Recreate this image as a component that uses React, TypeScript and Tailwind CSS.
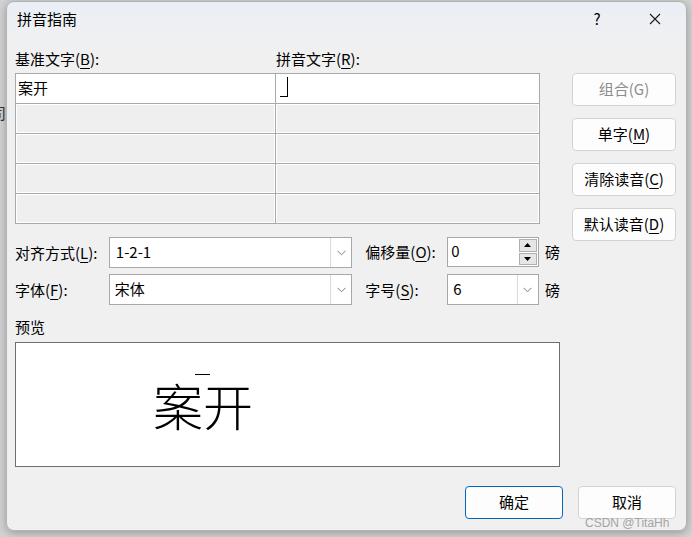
function U({ c }: { c: string }) {
  return <span className="underline underline-offset-[3px] decoration-1">{c}</span>;
}

function Chevron() {
  return (
    <svg width="9" height="6" viewBox="0 0 9 6" fill="none">
      <path d="M0.5 0.8 L4.5 4.8 L8.5 0.8" stroke="#7d7d7d" strokeWidth="1" />
    </svg>
  );
}

function Combo({ value, width, textClass }: { value: string; width: string; textClass?: string }) {
  return (
    <div className={`flex h-[31px] ${width} border border-[#a8a8a8] bg-white`}>
      <div className={`flex-1 pl-[5px] leading-[28px] ${textClass ?? ""}`}>{value}</div>
      <div className="flex w-[21px] items-center justify-center border-l border-[#dadada] bg-white">
        <Chevron />
      </div>
    </div>
  );
}

function Cell({ active, children }: { active?: boolean; children?: React.ReactNode }) {
  return (
    <div
      className={`-mt-px -ml-px h-[31px] border border-[#a9a9ab] ${
        active ? "bg-white" : "bg-[#efefef]"
      }`}
    >
      <div className={`h-full w-full ${active ? "" : "border border-white"}`}>{children}</div>
    </div>
  );
}

function SideButton({ children, disabled }: { children: React.ReactNode; disabled?: boolean }) {
  return (
    <button
      className={`h-[33px] w-[104px] rounded-[4px] border border-[#d3d3d3] bg-[#fdfdfd] text-[15px] ${
        disabled ? "text-[#8c8c8c]" : "text-black"
      }`}
    >
      {children}
    </button>
  );
}

export default function App() {
  return (
    <div className="relative h-[537px] w-[692px] overflow-hidden bg-[#d2d2d2] pl-[6px] pt-[1px] font-['Noto_Sans_CJK_SC',sans-serif] text-[15px] text-black">
      {/* app text behind the dialog */}
      <span className="absolute left-[-9px] top-[102px] text-[15px] text-[#333]">司</span>

      <div className="relative h-[530px] w-[681px] overflow-hidden rounded-[8px] border border-[#b3b3b3] bg-[linear-gradient(180deg,#eaeff6_0px,#f0f0f0_48px)] shadow-[0_2px_8px_rgba(0,0,0,0.28)]">
        {/* title bar */}
        <div className="flex h-[34px] items-center pl-[10px] pr-[11px]">
          <div className="text-[15px]">拼音指南</div>
          <div className="ml-auto w-[40px] text-center text-[15px]">?</div>
          <div className="ml-[18px] flex w-[40px] justify-center">
            <svg width="12" height="12" viewBox="0 0 12 12">
              <path d="M1 1 L11 11 M11 1 L1 11" stroke="#1a1a1a" strokeWidth="1.1" />
            </svg>
          </div>
        </div>

        {/* body */}
        <div className="flex pl-[8px] pr-[10px] pt-[13px]">
          <div className="w-[545px]">
            <div className="flex h-[20px] items-center">
              <div className="w-[261px]">
                基准文字(<U c="B" />):
              </div>
              <div>
                拼音文字(<U c="R" />):
              </div>
            </div>

            <div className="mt-[4px] grid w-[525px] grid-cols-[260px_264px] pl-px pt-px">
              <Cell active>
                <div className="pl-[2px] leading-[28px]">案开</div>
              </Cell>
              <Cell active>
                <div className="ml-[4px] mt-[3px] h-[20px] w-[8px] border-b border-r-[1.5px] border-black" />
              </Cell>
              <Cell />
              <Cell />
              <Cell />
              <Cell />
              <Cell />
              <Cell />
              <Cell />
              <Cell />
            </div>

            <div className="mt-[13px] flex items-start">
              <div className="w-[94px] leading-[31px]">
                对齐方式(<U c="L" />):
              </div>
              <Combo value="1-2-1" width="w-[244px]" textClass="pl-[6px]" />
              <div className="ml-[13px] w-[82px] leading-[30px]">
                偏移量(<U c="O" />):
              </div>
              <div className="flex h-[30px] w-[92px] border border-[#a8a8a8] bg-white">
                <div className="flex-1 pl-[3px] leading-[26px]">0</div>
                <div className="flex w-[19px] flex-col gap-px py-px pr-px">
                  <div className="flex flex-1 items-center justify-center border border-[#b0b0b0] bg-[#e6e6e6]">
                    <svg width="7" height="4" viewBox="0 0 7 4">
                      <path d="M0 4 L3.5 0 L7 4 Z" fill="#000" />
                    </svg>
                  </div>
                  <div className="flex flex-1 items-center justify-center border border-[#b0b0b0] bg-[#e6e6e6]">
                    <svg width="7" height="4" viewBox="0 0 7 4">
                      <path d="M0 0 L3.5 4 L7 0 Z" fill="#000" />
                    </svg>
                  </div>
                </div>
              </div>
              <div className="ml-[6px] leading-[30px]">磅</div>
            </div>

            <div className="mt-[6px] flex items-start">
              <div className="w-[94px] leading-[31px]">
                字体(<U c="F" />):
              </div>
              <Combo value="宋体" width="w-[244px]" textClass="pl-[2px] leading-[24px]" />
              <div className="ml-[13px] w-[82px] leading-[31px]">
                字号(<U c="S" />):
              </div>
              <Combo value="6" width="w-[92px]" textClass="pl-[2px] leading-[26px]" />
              <div className="ml-[6px] leading-[31px]">磅</div>
            </div>

            <div className="mt-[12px] h-[20px] leading-[20px]">预览</div>

            <div className="mt-[5px] h-[125px] w-[545px] border border-[#6e6e6e] bg-white pl-[137px] pt-[31px]">
              <div className="ml-[42px] h-px w-[15px] bg-black" />
              <div className="mt-[4px] text-[50px] font-light leading-[50px] tracking-[0px]">案开</div>
            </div>
          </div>

          <div className="ml-[12px] flex flex-col gap-[12px] pt-[24px]">
            <SideButton disabled>组合(G)</SideButton>
            <SideButton>
              单字(<U c="M" />)
            </SideButton>
            <SideButton>
              清除读音(<U c="C" />)
            </SideButton>
            <SideButton>
              默认读音(<U c="D" />)
            </SideButton>
          </div>
        </div>

        {/* footer */}
        <div className="mt-[19px] flex justify-end gap-[15px] pr-[10px]">
          <button className="h-[33px] w-[98px] rounded-[4px] border border-[#0067c0] bg-[#fdfdfd] text-[15px]">
            确定
          </button>
          <button className="h-[33px] w-[98px] rounded-[4px] border border-[#d3d3d3] bg-[#fdfdfd] text-[15px]">
            取消
          </button>
        </div>
      </div>

      <span className="absolute left-[585px] top-[514px] font-['Liberation_Sans',sans-serif] text-[12px] text-[#a4a4a4]">
        CSDN @TitaHh
      </span>
    </div>
  );
}
